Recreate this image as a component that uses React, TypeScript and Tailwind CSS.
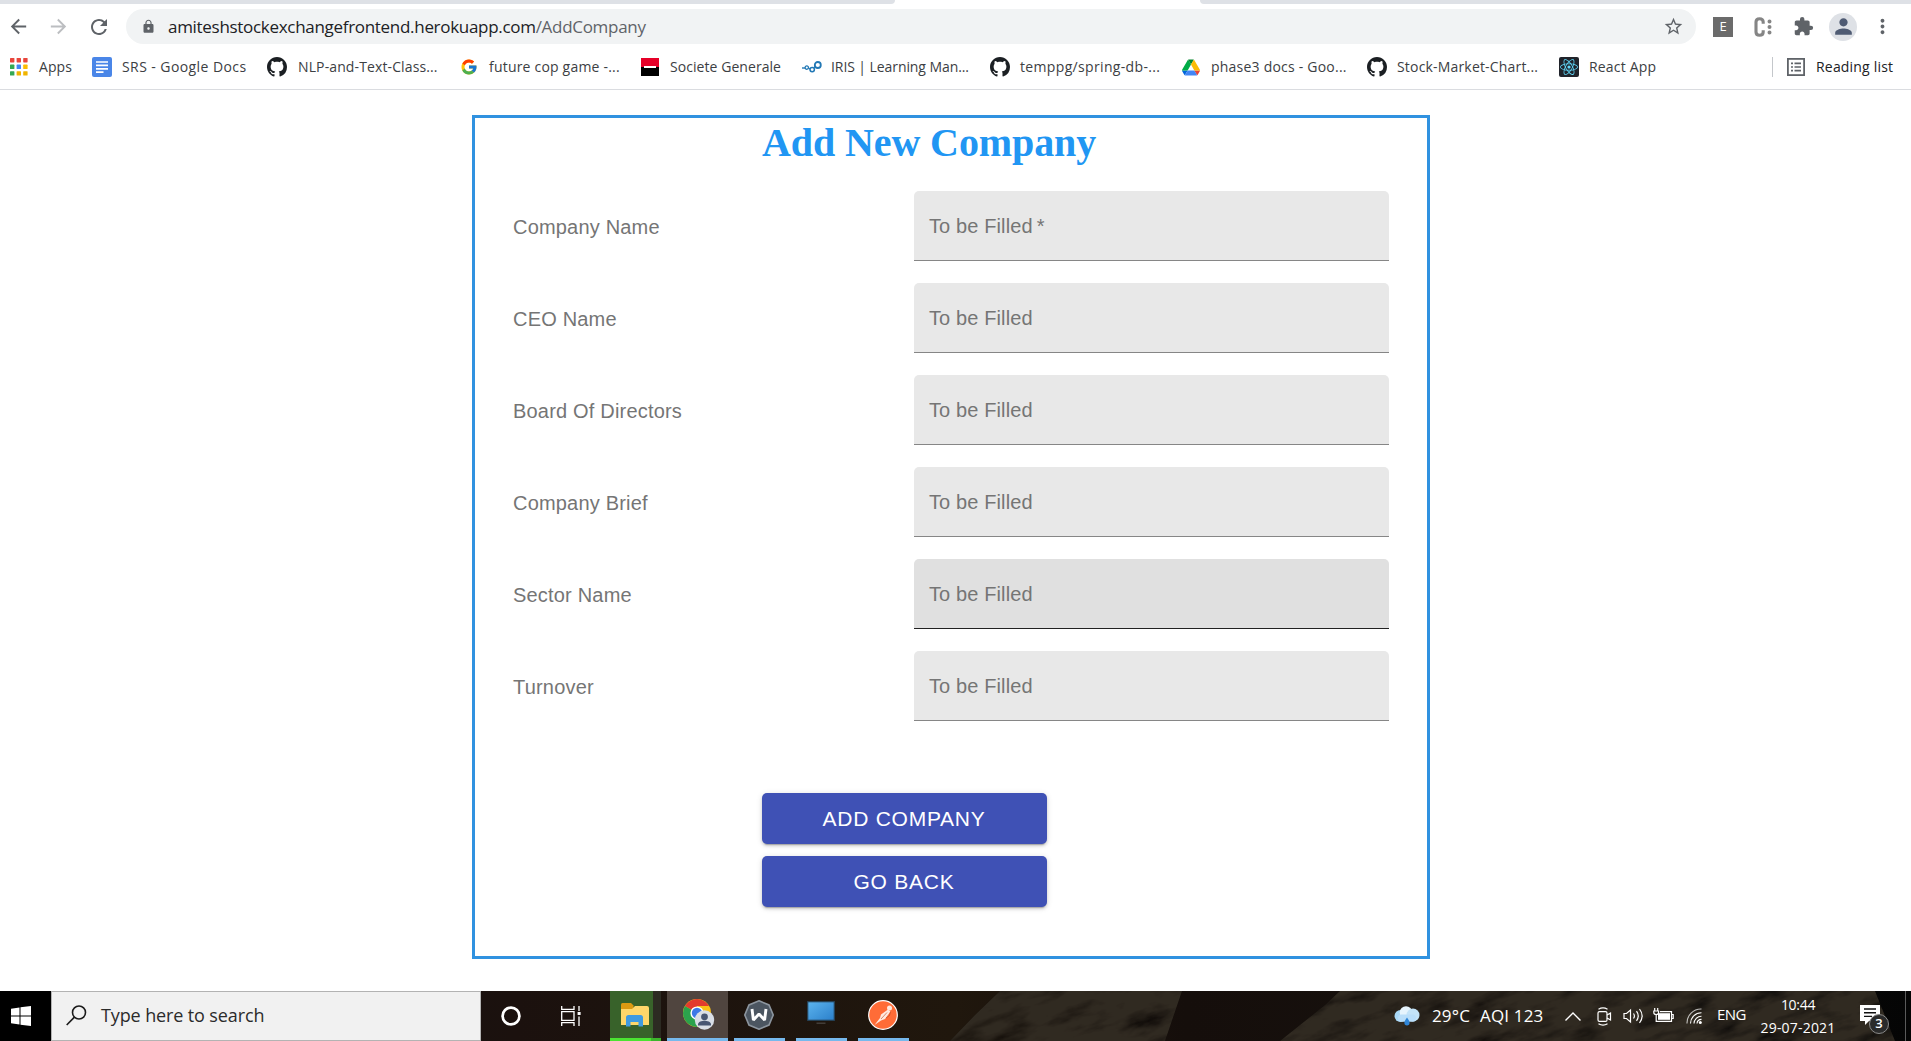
import type { ReactNode } from "react";
import { FaReact } from "react-icons/fa";
import { FcGoogle } from "react-icons/fc";
import { MdArrowBack, MdArrowForward, MdExtension, MdLock, MdMoreVert, MdPerson, MdRefresh, MdStarBorder } from "react-icons/md";

const AppsIcon = () => (
  <svg width="18" height="18" viewBox="0 0 18 18">
    {["#e8453c", "#e8453c", "#e8453c", "#34a853", "#4285f4", "#fbbc04", "#34a853", "#f0b400", "#f0b400"].map((c, i) => (
      <rect key={i} x={(i % 3) * 6.6} y={Math.floor(i / 3) * 6.6} width="4.4" height="4.4" rx="0.6" fill={c} />
    ))}
  </svg>
);

const DocsIcon = () => (
  <svg width="20" height="20" viewBox="0 0 20 20">
    <rect width="20" height="20" rx="2" fill="#4a86e8" />
    <path d="M4 5h12M4 8.4h12M4 11.8h12M4 15.2h7.5" stroke="#fff" strokeWidth="1.7" />
  </svg>
);

const GithubIcon = () => (
  <svg width="20" height="20" viewBox="0 0 16 16" fill="#1b1f23">
    <path d="M8 0C3.58 0 0 3.58 0 8c0 3.54 2.29 6.53 5.47 7.59.4.07.55-.17.55-.38 0-.19-.01-.82-.01-1.49-2.01.37-2.53-.49-2.69-.94-.09-.23-.48-.94-.82-1.13-.28-.15-.68-.52-.01-.53.63-.01 1.08.58 1.23.82.72 1.21 1.87.87 2.33.66.07-.52.28-.87.51-1.07-1.78-.2-3.64-.89-3.64-3.95 0-.87.31-1.59.82-2.15-.08-.2-.36-1.02.08-2.12 0 0 .67-.21 2.2.82.64-.18 1.32-.27 2-.27.68 0 1.36.09 2 .27 1.53-1.04 2.2-.82 2.2-.82.44 1.1.16 1.92.08 2.12.51.56.82 1.27.82 2.15 0 3.07-1.87 3.75-3.65 3.95.29.25.54.73.54 1.48 0 1.07-.01 1.93-.01 2.2 0 .21.15.46.55.38A8.013 8.013 0 0016 8c0-4.42-3.58-8-8-8z" />
  </svg>
);

const SocGenIcon = () => (
  <svg width="18" height="18" viewBox="0 0 18 18">
    <rect width="18" height="9" fill="#e60028" />
    <rect y="9" width="18" height="9" fill="#000" />
    <rect x="3" y="8" width="12" height="2" fill="#fff" />
  </svg>
);

const IrisIcon = () => (
  <svg width="20" height="12" viewBox="0 0 20 12" fill="none" stroke="#2278b5">
    <path d="M0 7h3" strokeWidth="1.4" />
    <circle cx="4.8" cy="6.6" r="1.7" strokeWidth="1.3" />
    <path d="M6.4 7l1.8 1" strokeWidth="1.2" />
    <circle cx="10.2" cy="8.6" r="2.2" strokeWidth="1.5" />
    <path d="M11.8 6.8l1.4-1.2" strokeWidth="1.3" />
    <circle cx="15.8" cy="4" r="3" strokeWidth="1.8" />
  </svg>
);

const DriveIcon = () => (
  <svg width="18" height="17" viewBox="0 0 87.3 78">
    <path d="m6.6 66.85 3.85 6.65c.8 1.4 1.95 2.5 3.3 3.3l13.75-23.8h-27.5c0 1.55.4 3.1 1.2 4.5z" fill="#0066da" />
    <path d="m43.65 25-13.75-23.8c-1.35.8-2.5 1.9-3.3 3.3l-25.4 44a9.06 9.06 0 0 0 -1.2 4.5h27.5z" fill="#00ac47" />
    <path d="m73.55 76.8c1.35-.8 2.5-1.9 3.3-3.3l1.6-2.75 7.65-13.25c.8-1.4 1.2-2.95 1.2-4.5h-27.5l5.85 11.5z" fill="#ea4335" />
    <path d="m43.65 25 13.75-23.8c-1.35-.8-2.9-1.2-4.5-1.2h-18.5c-1.6 0-3.15.45-4.5 1.2z" fill="#00832d" />
    <path d="m59.8 53h-32.3l-13.75 23.8c1.35.8 2.9 1.2 4.5 1.2h50.8c1.6 0 3.15-.45 4.5-1.2z" fill="#4285f4" />
    <path d="m73.4 26.5-12.7-22c-.8-1.4-1.95-2.5-3.3-3.3l-13.75 23.8 16.15 28h27.45c0-1.55-.4-3.1-1.2-4.5z" fill="#fbbc04" />
  </svg>
);

const ReactFavicon = () => (
  <span className="flex size-5 items-center justify-center rounded-[2px] bg-[#20232a]">
    <FaReact size={18} color="#61dafb" />
  </span>
);

const ReadingListIcon = () => (
  <svg width="18" height="18" viewBox="0 0 18 18" fill="none" stroke="#5f6368">
    <rect x="0.9" y="0.9" width="16.2" height="16.2" strokeWidth="1.8" />
    <path d="M4 5.4h2M4 9h2M4 12.6h2M7.5 5.4H14M7.5 9H14M7.5 12.6H14" strokeWidth="1.6" />
  </svg>
);

interface Bookmark {
  label: string;
  icon: ReactNode;
  box: string;
  slot: string;
  tracking: string;
}

const bookmarks: Bookmark[] = [
  { label: "Apps", icon: <AppsIcon />, box: "w-[82px]", slot: "w-[29px]", tracking: "tracking-[0.1px]" },
  { label: "SRS - Google Docs", icon: <DocsIcon />, box: "w-[175px]", slot: "w-[30px]", tracking: "tracking-[0.42px]" },
  { label: "NLP-and-Text-Class...", icon: <GithubIcon />, box: "w-[193px]", slot: "w-[31px]", tracking: "tracking-[0.12px]" },
  { label: "future cop game -...", icon: <FcGoogle size={18} />, box: "w-[181px]", slot: "w-[29px]", tracking: "tracking-[0.2px]" },
  { label: "Societe Generale", icon: <SocGenIcon />, box: "w-[161px]", slot: "w-[29px]", tracking: "tracking-[0.06px]" },
  { label: "IRIS | Learning Man...", icon: <IrisIcon />, box: "w-[188px]", slot: "w-[29px]", tracking: "tracking-[-0.08px]" },
  { label: "temppg/spring-db-...", icon: <GithubIcon />, box: "w-[192px]", slot: "w-[30px]", tracking: "tracking-[0.34px]" },
  { label: "phase3 docs - Goo...", icon: <DriveIcon />, box: "w-[185px]", slot: "w-[29px]", tracking: "tracking-[0.22px]" },
  { label: "Stock-Market-Chart...", icon: <GithubIcon />, box: "w-[192px]", slot: "w-[30px]", tracking: "tracking-[0.18px]" },
  { label: "React App", icon: <ReactFavicon />, box: "w-[213px]", slot: "w-[30px]", tracking: "tracking-[0.17px]" },
];

function BrowserChrome() {
  return (
    <header className="h-[90px] shrink-0 border-b border-[#dadce0] bg-white text-[#3c4043]">
      <div className="flex h-1 justify-between">
        <div className="w-[895px] rounded-br-[5px] bg-[#dee1e6]" />
        <div className="w-[711px] rounded-bl-[5px] bg-[#dee1e6]" />
      </div>
      <div className="mt-[5px] flex h-[35px] items-center">
        <MdArrowBack className="ml-[7px] shrink-0" size={23} color="#5f6368" />
        <MdArrowForward className="ml-[17px] shrink-0" size={23} color="#bcbec1" />
        <MdRefresh className="ml-[17px] shrink-0" size={24} color="#5f6368" />
        <div className="ml-[15px] flex h-full w-[1570px] items-center rounded-full bg-[#f1f3f4] pr-[12px] pl-[15px]">
          <MdLock size={15} color="#5f6368" />
          <span className="ml-[12px] text-[17px] tracking-[-0.3px] whitespace-nowrap text-[#202124]">
            amiteshstockexchangefrontend.herokuapp.com<span className="text-[#5f6368]">/AddCompany</span>
          </span>
          <MdStarBorder className="ml-auto" size={21} color="#5f6368" />
        </div>
        <span className="ml-[17px] flex size-5 items-center justify-center bg-[#6b6b6b] text-[13px] font-medium text-white">E</span>
        <svg className="ml-[21px]" width="18" height="20" viewBox="0 0 18 20" fill="none" stroke="#858585">
          <path d="M9.2 6.8V5c0-2.200-1.200-3.300-3.600-3.300S2 2.800 2 5v10c0 2.200 1.200 3.300 3.600 3.300S9.200 17.200 9.200 15v-1.800" strokeWidth="3.100" />
          <circle cx="15.5" cy="4.400" r="1" strokeWidth="2" />
          <circle cx="15.500" cy="10" r="1" strokeWidth="2" />
          <circle cx="15.500" cy="15.600" r="1" strokeWidth="2" />
        </svg>
        <MdExtension className="ml-[21px]" size={21} color="#5f6368" />
        <span className="ml-[15px] flex size-7 items-center justify-center rounded-full bg-[#dee1e6]">
          <MdPerson size={25} color="#4f5b73" />
        </span>
        <MdMoreVert className="ml-[14px]" size={23} color="#5f6368" />
      </div>
      <nav className="mt-[7px] flex h-8 items-center pl-[10px] text-sm whitespace-nowrap">
        {bookmarks.map((b) => (
          <div key={b.label} className={`flex shrink-0 items-center ${b.box}`}>
            <span className={`shrink-0 ${b.slot}`}>{b.icon}</span>
            <span className={b.tracking}>{b.label}</span>
          </div>
        ))}
        <div className="h-5 w-px bg-[#c4c7cb]" />
        <span className="ml-[14px]">
          <ReadingListIcon />
        </span>
        <span className="ml-[11px] tracking-[0.19px] text-[#202124]">Reading list</span>
      </nav>
    </header>
  );
}

const fields = [
  { label: "Company Name", hint: "To be Filled", required: true },
  { label: "CEO Name", hint: "To be Filled" },
  { label: "Board Of Directors", hint: "To be Filled" },
  { label: "Company Brief", hint: "To be Filled" },
  { label: "Sector Name", hint: "To be Filled", hovered: true },
  { label: "Turnover", hint: "To be Filled" },
];

function FormButton({ children }: { children: ReactNode }) {
  return (
    <button className="h-[51px] w-[285px] rounded-[5px] bg-[#3f51b5] pr-px text-[21px] tracking-[0.75px] text-white shadow-[0_3px_1px_-2px_rgba(0,0,0,0.2),0_2px_3px_0_rgba(0,0,0,0.14),0_1px_6px_0_rgba(0,0,0,0.12)]">
      {children}
    </button>
  );
}

function CompanyForm() {
  return (
    <main className="flex-1 font-['Liberation_Sans',Arial,sans-serif]">
      <section className="mt-[25px] ml-[472px] h-[844px] w-[958px] border-3 border-[#3092e0] pl-[38px]">
        <h1 className="ml-[249px] h-[73px] pt-[2px] font-['Liberation_Serif',serif] text-[40px] leading-[46px] font-bold tracking-[-0.1px] text-[#2196f3]">
          Add New Company
        </h1>
        <div className="flex flex-col gap-[22px]">
          {fields.map((f) => (
            <div key={f.label} className="flex h-[70px] items-center text-xl text-[#757575]">
              <span className="w-[401px] pt-[2px] tracking-[0.19px]">{f.label}</span>
              <div
                className={
                  f.hovered
                    ? "flex h-full w-[475px] items-center rounded-t-[5px] border-b border-[#212121] bg-[#e0e0e0] pl-[15px]"
                    : "flex h-full w-[475px] items-center rounded-t-[5px] border-b border-[#868686] bg-[#e8e8e8] pl-[15px]"
                }
              >
                <span className="tracking-[0.12px]">
                  {f.hint}
                  {f.required && <span className="ml-1">*</span>}
                </span>
              </div>
            </div>
          ))}
        </div>
        <div className="mt-[72px] ml-[249px] flex flex-col gap-3">
          <FormButton>ADD COMPANY</FormButton>
          <FormButton>GO BACK</FormButton>
        </div>
      </section>
    </main>
  );
}

/* Dark rocky wallpaper seen through the translucent taskbar. */
const TaskbarTexture = () => (
  <svg className="absolute inset-0" width="1911" height="50" preserveAspectRatio="none">
    <defs>
      <filter id="rock" x="0" y="0" width="100%" height="100%">
        <feTurbulence type="fractalNoise" baseFrequency="0.022 0.07" numOctaves="5" seed="8" />
        <feColorMatrix
          colorInterpolationFilters="sRGB"
          values="0 0 0 0 0.19  0 0 0 0 0.165  0 0 0 0 0.13  2.6 0 0 0 -1"
        />
      </filter>
      <linearGradient id="base">
        <stop offset="0" stopColor="#101010" />
        <stop offset="0.27" stopColor="#1b110e" />
        <stop offset="0.5" stopColor="#20170d" />
        <stop offset="0.62" stopColor="#150e0b" />
        <stop offset="0.82" stopColor="#17120e" />
        <stop offset="0.9" stopColor="#0a0808" />
        <stop offset="1" stopColor="#050505" />
      </linearGradient>
      <clipPath id="ridges">
        <path d="M950 50 L975 24 L1000 0 H1182 L1165 50Z M1280 50 L1325 14 L1340 0 H1875 L1895 50Z" />
      </clipPath>
    </defs>
    <rect width="1911" height="50" fill="url(#base)" />
    <g clipPath="url(#ridges)">
      <rect width="1911" height="50" fill="#0c0908" opacity="0.5" />
      <g transform="rotate(-18 1400 25)">
        <rect x="850" y="-250" width="1100" height="550" filter="url(#rock)" />
      </g>
    </g>
  </svg>
);

const ExplorerIcon = () => (
  <svg width="28" height="24" viewBox="0 0 28 24">
    <path d="M0 1.5Q0 0 1.5 0H10l2.5 2.5V6H0z" fill="#dc9a12" />
    <path d="M0 6h11l3-3h12q2 0 2 2v17H0z" fill="#ffd76a" />
    <path d="M5 23.5V14.5Q5 12 7.5 12h12q2.5 0 2.5 2.5v9h-4.5V19h-8v4.5z" fill="#3f9ae0" />
  </svg>
);

const ChromeIcon = () => (
  <svg width="32" height="31" viewBox="0 0 32 31">
    <circle cx="14" cy="14" r="14" fill="#fbc116" />
    <path d="M14 14L1.9 7A14 14 0 0 1 26.1 7H14z" fill="#e33b2e" />
    <path d="M14 14L1.9 7A14 14 0 0 0 14 28l6-10.5z" fill="#2ba24c" />
    <circle cx="14" cy="14" r="6.6" fill="#fff" />
    <circle cx="14" cy="14" r="5.2" fill="#3b78e7" />
    <circle cx="21.5" cy="21" r="9.7" fill="#d9dee6" />
    <circle cx="21.5" cy="17.8" r="3.4" fill="#485672" />
    <path d="M15 26.500v-1.300c0-2.500 4-3.500 6.500-3.500s6.500 1 6.500 3.500v1.300z" fill="#485672" />
  </svg>
);

const WIcon = () => (
  <svg width="30" height="30" viewBox="0 0 30 30">
    <path d="M15 .8L25 4.900 29.200 15 25 25.100 15 29.200 5 25.100 .8 15 5 4.900z" fill="#4c5661" stroke="#8c959e" strokeWidth="1.6" />
    <path d="M8 9l1.400 11L15 14l5.600 6L22 9" fill="none" stroke="#fff" strokeWidth="2.9" strokeLinejoin="bevel" />
  </svg>
);

const MonitorIcon = () => (
  <svg width="28" height="24" viewBox="0 0 28 24">
    <defs>
      <linearGradient id="screen" x1="0" y1="0" x2="1" y2="1">
        <stop offset="0" stopColor="#5cb4ee" />
        <stop offset="1" stopColor="#2b7fca" />
      </linearGradient>
    </defs>
    <rect x="0.7" y="0.7" width="26.6" height="18.6" fill="url(#screen)" stroke="#254257" strokeWidth="1.2" />
    <path d="M9.5 22.2h9" stroke="#4a4540" strokeWidth="1.3" />
  </svg>
);

const PostmanIcon = () => (
  <svg width="30" height="30" viewBox="0 0 30 30">
    <circle cx="15" cy="15" r="14.3" fill="#ff6c37" stroke="#fff" strokeWidth="1.2" />
    <circle cx="21.5" cy="8" r="2.5" fill="#ffe9df" />
    <path d="M20 9.5l2.5 2-5.5 7.5-4 1.5-6.5 4.5 5.5-7 1-3.500z" fill="#ffe9df" />
    <path d="M13 19l6-6.5M22.5 11.5l-1 4-3.5 2.5" fill="none" stroke="#b9451c" strokeWidth="0.6" />
  </svg>
);

function TaskbarApp({ children, running }: { children: ReactNode; running: string }) {
  return (
    <div className={`flex shrink-0 flex-col ${running}`}>
      <div className="flex h-[47px] items-center justify-center">{children}</div>
      <div className="h-[3px] bg-[#76b9ed]" />
    </div>
  );
}

const WeatherIcon = () => (
  <svg width="26" height="21" viewBox="0 0 26 21">
    <circle cx="6.5" cy="10" r="6" fill="#a9d9f7" />
    <circle cx="12" cy="6.5" r="6.3" fill="#e6f4fd" />
    <circle cx="19" cy="9" r="6.5" fill="#c3e3f8" />
    <rect x="4" y="8.5" width="18" height="7.3" rx="3.5" fill="#b9defa" />
    <path d="M13 11.5c1.8 2.5 2.6 3.7 2.6 5.3a2.6 2.6 0 0 1-5.2 0c0-1.6.8-2.8 2.6-5.3z" fill="#2f86d8" />
  </svg>
);

const CameraIcon = () => (
  <svg width="15" height="19" viewBox="0 0 15 19" fill="none" stroke="#fff" strokeWidth="1.2">
    <rect x="1" y="4.6" width="9" height="9.8" rx="1.5" />
    <path d="M10 8l3.5-2v7L10 11M1.5 2.200Q6 -.5 10.500 2.200M1.500 16.800Q6 19.500 10.500 16.800" />
  </svg>
);

const SpeakerIcon = () => (
  <svg width="21" height="18" viewBox="0 0 21 18" fill="none" stroke="#fff" strokeWidth="1.2">
    <path d="M1 6.5h2.5L7.5 3v12l-4-3.5H1zM10.5 6.5q1.8 2.5 0 5M13.5 4.2q3.5 4.8 0 9.6M16.5 2q5.3 7 0 14" />
  </svg>
);

const BatteryIcon = () => (
  <svg width="21" height="16" viewBox="0 0 21 16" fill="none" stroke="#fff" strokeWidth="1.2">
    <path d="M1.7 0v3M4.7 0v3M.8 3h4.8v1.5q0 2-2.4 2T.8 4.500zM3.200 6.500V13.400H18.500V3.600H7M18.700 6.500h1.500v4h-1.500" />
    <rect x="5" y="5.2" width="12" height="6.6" fill="#fff" stroke="none" />
  </svg>
);

const WifiIcon = () => (
  <svg width="17" height="17" viewBox="0 0 17 17" fill="none" stroke="#fff" strokeWidth="1.1">
    <path d="M1 15.5A14 14 0 0 1 15.5 1" opacity="0.7" />
    <path d="M4.5 15.5A10.8 10.8 0 0 1 15.5 4.7M8 15.5A7.5 7.5 0 0 1 15.5 8.2M11 15.5A4.5 4.5 0 0 1 15.5 11.4" />
    <circle cx="14.3" cy="14.5" r="1.5" fill="#fff" stroke="none" />
  </svg>
);

function Taskbar() {
  return (
    <footer className="relative h-[50px] shrink-0 overflow-hidden text-white">
      <TaskbarTexture />
      <div className="relative flex h-full items-center">
        <div className="flex h-full w-[51px] shrink-0 items-center justify-center bg-black pr-[9px]">
          <svg width="20" height="20" viewBox="0 0 20 20" fill="#fff">
            <path d="M0 2.7L8.5 1.5v8H0zM9.5 1.35L20 0v9.5H9.5zM0 10.5h8.5v8L0 17.3zM9.5 10.5H20V20L9.5 18.65z" />
          </svg>
        </div>
        <div className="flex h-full w-[430px] shrink-0 items-center border border-[#b3b3b3] bg-[#f1f1f1] pl-[14px] text-[#2b2b2b]">
          <svg className="-mt-[2px]" width="21" height="21" viewBox="0 0 21 21" fill="none" stroke="#1a1a1a" strokeWidth="1.6">
            <circle cx="13" cy="7.5" r="6.5" />
            <path d="M8.4 12.1L.7 20" />
          </svg>
          <span className="-mt-[2px] ml-[14px] text-lg tracking-[-0.12px]">Type here to search</span>
        </div>
        <svg className="ml-5 shrink-0" width="20" height="20" viewBox="0 0 20 20">
          <circle cx="10" cy="10" r="8.4" fill="none" stroke="#fff" strokeWidth="2.7" />
        </svg>
        <svg className="ml-10 shrink-0" width="20" height="20" viewBox="0 0 20 20" fill="none" stroke="#fff" strokeWidth="1.3">
          <path d="M.7 0v3.300H13V0M.7 20v-3.300H13V20M.7 5.700H13v8.600H.7zM18 0v5M18 10.500V20" />
          <rect x="16.6" y="6" width="3" height="3" fill="#fff" stroke="none" />
        </svg>
        <div className="ml-[29px] flex h-full w-[51px] shrink-0 flex-col">
          <div className="flex h-[47px]">
            <div className="flex w-[43px] items-center bg-[#38622a] pl-[11px]">
              <ExplorerIcon />
            </div>
            <div className="w-2 bg-[#2c2a22]" />
          </div>
          <div className="flex h-[3px]">
            <div className="w-[41px] bg-[#4be332]" />
            <div className="w-[10px] bg-[#3cb52c]" />
          </div>
        </div>
        <TaskbarApp running="ml-[6px] w-[61px] bg-[#50453f]">
          <span className="pl-[2px]">
            <ChromeIcon />
          </span>
        </TaskbarApp>
        <TaskbarApp running="ml-[6px] w-[51px]">
          <span className="pr-[2px]">
            <WIcon />
          </span>
        </TaskbarApp>
        <TaskbarApp running="ml-[11px] w-[51px]">
          <span className="pr-px pb-[3px]">
            <MonitorIcon />
          </span>
        </TaskbarApp>
        <TaskbarApp running="ml-[11px] w-[51px]">
          <span className="pr-px">
            <PostmanIcon />
          </span>
        </TaskbarApp>
        <div className="ml-auto flex h-full shrink-0 items-center whitespace-nowrap">
          <div className="w-[38px]">
            <WeatherIcon />
          </div>
          <div className="flex w-[133px] gap-[10px] text-[17px] tracking-[0.15px]">
            <span>29°C</span>
            <span>AQI 123</span>
          </div>
          <div className="w-8">
            <svg width="16" height="9" viewBox="0 0 16 9" fill="none" stroke="#fff" strokeWidth="1.4">
              <path d="M.5 8.5L8 1l7.5 7.5" />
            </svg>
          </div>
          <div className="w-[26px]">
            <CameraIcon />
          </div>
          <div className="w-[30px]">
            <SpeakerIcon />
          </div>
          <div className="w-[33px]">
            <BatteryIcon />
          </div>
          <div className="w-[31px]">
            <WifiIcon />
          </div>
          <div className="-mt-[3px] w-[37px] text-[15px] tracking-[-0.6px]">ENG</div>
          <div className="flex w-[88px] flex-col items-center text-[14px] leading-[23px]">
            <span className="tracking-[-0.3px]">10:44</span>
            <span className="tracking-[0.2px]">29-07-2021</span>
          </div>
          <div className="relative mt-[-2px] ml-[18px] w-[45px]">
            <svg width="20" height="20" viewBox="0 0 20 20">
              <path d="M0 0h20v16H9l-4 4v-4H0z" fill="#fff" />
              <path d="M4 4h12M4 7.7h12M4 11.4h8" stroke="#111" strokeWidth="1.4" />
            </svg>
            <span className="absolute top-[9px] left-[9px] flex size-5 items-center justify-center rounded-full border border-[#8a8a8a] bg-[#2b2b2b] text-[13px] font-semibold">
              3
            </span>
          </div>
          <div className="h-full w-[6px] border-l border-[#5a5a5a]" />
        </div>
      </div>
    </footer>
  );
}

export default function App() {
  return (
    <div className="flex h-[1041px] w-[1911px] flex-col overflow-hidden bg-white font-['Open_Sans',sans-serif]">
      <BrowserChrome />
      <CompanyForm />
      <Taskbar />
    </div>
  );
}
